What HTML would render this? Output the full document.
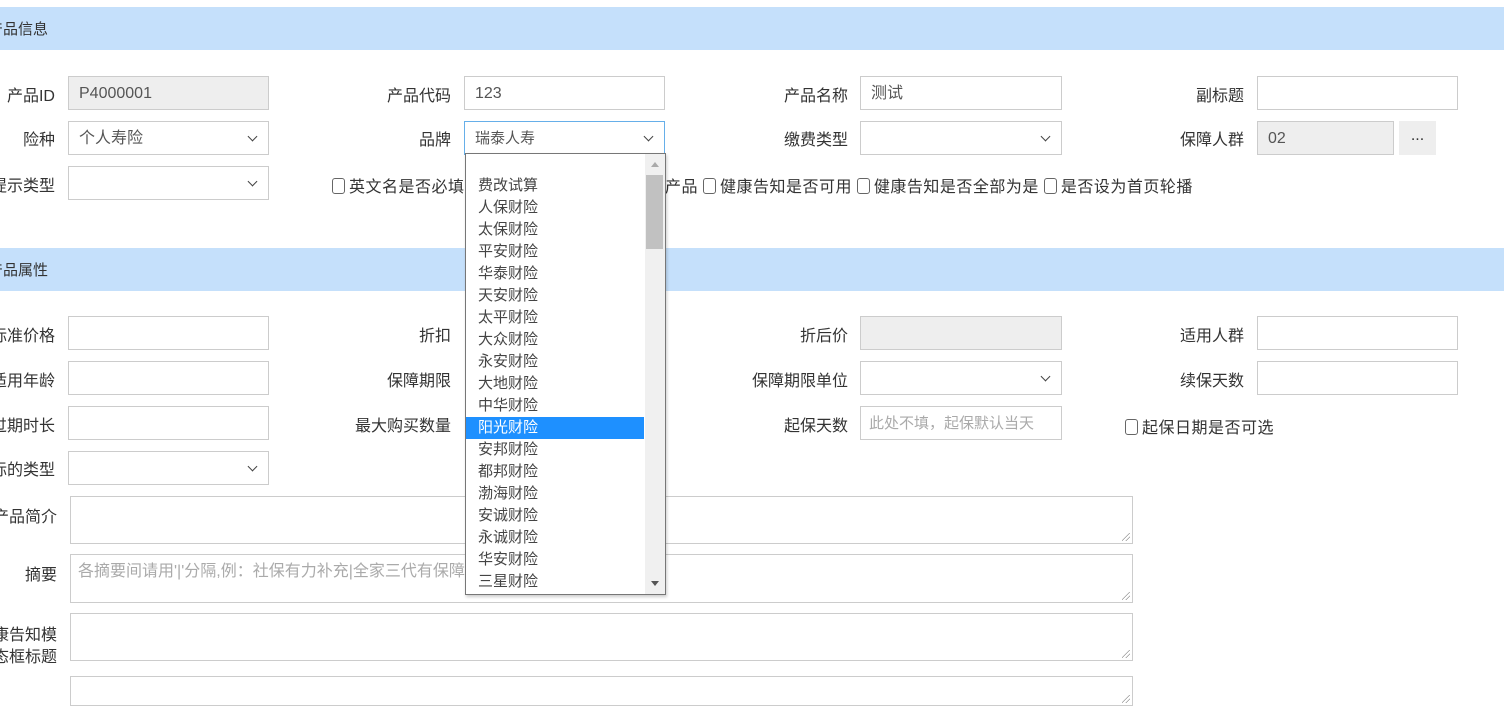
<!DOCTYPE html>
<html><head><meta charset="utf-8"><style>
*{box-sizing:border-box;margin:0;padding:0}
body{width:1504px;height:683px;overflow:hidden;background:#fff;position:relative;font-family:"Liberation Sans","Noto Sans CJK SC",sans-serif;font-size:16px;color:#333}
.bar{position:absolute;left:0;width:1504px;height:43px;background:#c5e0fb;line-height:43px}
.bar span{position:absolute;left:-12px;font-size:15px;top:1px}
.l{position:absolute;text-align:right;white-space:nowrap;line-height:20px}
.i{position:absolute;height:34px;border:1px solid #ccc;background:#fff;padding-left:10px;line-height:34px;color:#555}
.g{background:#eee}
.s::after{content:"";position:absolute;right:12px;top:11px;width:6px;height:6px;border-right:1.6px solid #444;border-bottom:1.6px solid #444;transform:rotate(45deg)}
.t{position:absolute;left:70px;width:1063px;border:1px solid #ccc;background:#fff}
.t::after{content:"";position:absolute;right:2px;bottom:2px;width:8px;height:8px;background:linear-gradient(135deg,transparent 45%,#999 46%,#999 52%,transparent 53%,transparent 70%,#999 71%,#999 77%,transparent 78%)}
.cb{position:absolute;white-space:nowrap;line-height:20px;letter-spacing:.5px}
.cb i{display:inline-block;width:13px;height:16px;border:1px solid #666;border-radius:3px;vertical-align:-2px;margin-right:4px}
.dd{position:absolute;left:465px;top:153px;width:201px;height:442px;border:1px solid #777;background:#fff;box-shadow:1px 2px 3px rgba(0,0,0,.2)}
.dd div.it{height:22px;line-height:22px;padding-left:12px;color:#444;font-size:15px}
.dd .sel{background:#1e90ff;color:#fff!important;width:178px}
.sb{position:absolute;right:0;top:0;width:20px;height:100%;background:#f0f0f0}
</style></head><body>
<div class="bar" style="top:7px"><span>产品信息</span></div>
<div class="l" style="right:1449px;top:87px">产品ID</div>
<div class="i g" style="left:68px;top:76px;width:201px">P4000001</div>
<div class="l" style="right:1053px;top:87px">产品代码</div>
<div class="i" style="left:464px;top:76px;width:201px">123</div>
<div class="l" style="right:656px;top:87px">产品名称</div>
<div class="i" style="left:860px;top:76px;width:202px">测试</div>
<div class="l" style="right:260px;top:87px">副标题</div>
<div class="i" style="left:1257px;top:76px;width:201px"></div>

<div class="l" style="right:1449px;top:131px">险种</div>
<div class="i s" style="left:68px;top:121px;width:201px">个人寿险</div>
<div class="l" style="right:1053px;top:131px">品牌</div>
<div class="i s" style="left:464px;top:121px;width:201px;border-color:#66afe9;font-size:15px">瑞泰人寿</div>
<div class="l" style="right:656px;top:131px">缴费类型</div>
<div class="i s" style="left:860px;top:121px;width:202px"></div>
<div class="l" style="right:260px;top:131px">保障人群</div>
<div class="i g" style="left:1257px;top:121px;width:137px">02</div>
<div style="position:absolute;left:1399px;top:121px;width:37px;height:34px;background:#eee;text-align:center;line-height:30px">...</div>

<div class="l" style="right:1449px;top:177px">提示类型</div>
<div class="i s" style="left:68px;top:166px;width:201px"></div>
<div class="cb" style="left:332px;top:178px"><i></i>英文名是否必填</div>
<div class="cb" style="left:665px;top:178px">产品 <i></i>健康告知是否可用 <i></i>健康告知是否全部为是 <i></i>是否设为首页轮播</div>

<div class="bar" style="top:248px"><span>产品属性</span></div>
<div class="l" style="right:1449px;top:327px">标准价格</div>
<div class="i" style="left:68px;top:316px;width:201px"></div>
<div class="l" style="right:1053px;top:327px">折扣</div>
<div class="l" style="right:656px;top:327px">折后价</div>
<div class="i g" style="left:860px;top:316px;width:202px"></div>
<div class="l" style="right:260px;top:327px">适用人群</div>
<div class="i" style="left:1257px;top:316px;width:201px"></div>

<div class="l" style="right:1449px;top:372px">适用年龄</div>
<div class="i" style="left:68px;top:361px;width:201px"></div>
<div class="l" style="right:1053px;top:372px">保障期限</div>
<div class="l" style="right:656px;top:372px">保障期限单位</div>
<div class="i s" style="left:860px;top:361px;width:202px"></div>
<div class="l" style="right:260px;top:372px">续保天数</div>
<div class="i" style="left:1257px;top:361px;width:201px"></div>

<div class="l" style="right:1449px;top:417px">过期时长</div>
<div class="i" style="left:68px;top:406px;width:201px"></div>
<div class="l" style="right:1053px;top:417px">最大购买数量</div>
<div class="l" style="right:656px;top:417px">起保天数</div>
<div class="i" style="left:860px;top:406px;width:202px;color:#aaa;padding-left:8px;font-size:15px">此处不填，起保默认当天</div>
<div class="cb" style="left:1125px;top:419px"><i></i>起保日期是否可选</div>

<div class="l" style="right:1449px;top:461px">标的类型</div>
<div class="i s" style="left:68px;top:451px;width:201px"></div>

<div class="l" style="right:1447px;top:508px">产品简介</div>
<div class="t" style="top:496px;height:48px"></div>
<div class="l" style="right:1447px;top:566px">摘要</div>
<div class="t" style="top:554px;height:49px;color:#aaa;padding:2px 7px">各摘要间请用'|'分隔,例：社保有力补充|全家三代有保障</div>
<div class="l" style="right:1447px;top:625px;line-height:22px">健康告知模<br>态框标题</div>
<div class="t" style="top:613px;height:48px"></div>
<div class="t" style="top:676px;height:30px"></div>

<div class="dd">
<div class="sb"><div style="position:absolute;left:1px;top:21px;width:17px;height:74px;background:#c1c1c1"></div>
<div style="position:absolute;left:6px;top:8px;border:4px solid transparent;border-bottom:5px solid #aaa;border-top:0"></div>
<div style="position:absolute;left:6px;bottom:8px;border:4px solid transparent;border-top:5px solid #555;border-bottom:0"></div></div>
<div class="it" style="height:21px"></div>
<div class="it">费改试算</div><div class="it">人保财险</div><div class="it">太保财险</div><div class="it">平安财险</div><div class="it">华泰财险</div><div class="it">天安财险</div><div class="it">太平财险</div><div class="it">大众财险</div><div class="it">永安财险</div><div class="it">大地财险</div><div class="it">中华财险</div><div class="it sel">阳光财险</div><div class="it">安邦财险</div><div class="it">都邦财险</div><div class="it">渤海财险</div><div class="it">安诚财险</div><div class="it">永诚财险</div><div class="it">华安财险</div><div class="it">三星财险</div>
</div>
</body></html>
